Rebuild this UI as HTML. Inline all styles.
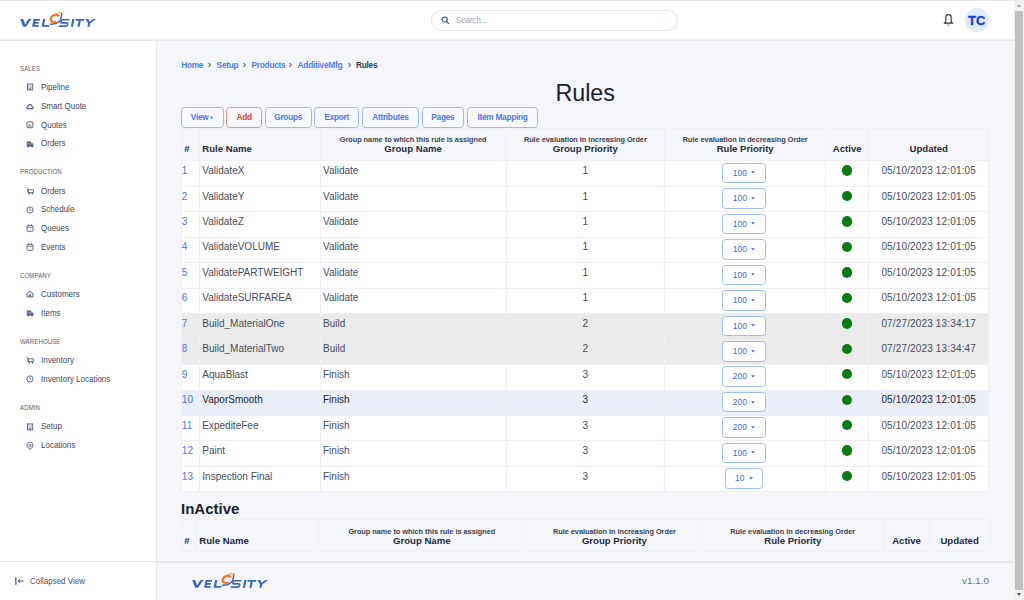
<!DOCTYPE html><html><head><meta charset='utf-8'><style>
*{box-sizing:border-box;margin:0;padding:0}
html,body{width:1024px;height:600px;overflow:hidden;background:#f5f6fa;font-family:"Liberation Sans", sans-serif;}
.a{position:absolute;white-space:nowrap}
.sb-l{position:absolute;left:20px;font-size:7px;color:#535c70;letter-spacing:0.1px;transform:scaleX(0.87);transform-origin:0 0}
.sb-i{position:absolute;left:41px;font-size:8.6px;color:#3f4659;transform:scaleX(0.93);transform-origin:0 0}
.ic{position:absolute;left:26px;width:7px;height:7px}
.bc{position:absolute;top:60.2px;font-size:8.3px;font-weight:bold;color:#4f7cf3;letter-spacing:-0.25px}
.chev{position:absolute;top:61px;font-size:7px;color:#5a6070}
.btn{position:absolute;top:107.3px;height:20.4px;border:1px solid #9db8f8;border-radius:3.5px;font-size:8.3px;font-weight:bold;color:#4d78ef;text-align:center;line-height:18.6px;background:#f7f8fc;letter-spacing:-0.28px}
.tline{position:absolute;background:#eef0f5}
.td{position:absolute;font-size:10px;color:#474d5c;white-space:nowrap}
.th{position:absolute;font-size:9.6px;font-weight:bold;color:#262b3a;white-space:nowrap;text-align:center}
.ths{position:absolute;font-size:7.3px;font-weight:bold;color:#3a3f4d;white-space:nowrap;text-align:center}
.dd{position:absolute;height:20.5px;border:1.1px solid #a0bbfa;border-radius:3.5px;background:#fff;font-size:8.5px;color:#3d6af0;text-align:center;line-height:18.4px}
.car{display:inline-block;margin-left:4.2px;vertical-align:1.4px}
.dot{position:absolute;width:10.4px;height:10.4px;border-radius:50%;background:#0a7a12}
</style></head><body>
<div class="a" style="left:0;top:0;width:1014px;height:40px;background:#fff"></div>
<div class="a" style="left:0;top:0;width:1014px;height:1px;background:#ebebeb"></div>
<div class="a" style="left:0;top:39px;width:1014px;height:1px;background:#eceef3"></div><div class="a" style="left:0;top:40px;width:1014px;height:1px;background:#e6e8ee"></div>
<svg class="a" style="left:0px;top:0px" width="100" height="30" viewBox="0 0 100 30" overflow="visible"><g fill="#3d66c2"><polygon points="20.14,19.00 23.14,19.00 25.10,24.20 28.54,19.00 31.54,19.00 25.98,26.80 23.18,26.80"/><polygon points="33.64,19.00 40.14,19.00 39.80,20.70 35.50,20.70 35.22,22.10 38.92,22.10 38.60,23.70 34.90,23.70 34.62,25.10 38.72,25.10 38.38,26.80 32.08,26.80"/><polygon points="43.14,19.00 45.34,19.00 44.12,25.10 49.32,25.10 48.98,26.80 41.58,26.80"/><polygon points="72.34,19.00 74.54,19.00 72.98,26.80 70.78,26.80"/><polygon points="75.74,19.00 84.44,19.00 84.10,20.70 80.80,20.70 79.58,26.80 77.38,26.80 78.60,20.70 75.40,20.70"/><polygon points="85.44,19.00 88.34,19.00 89.58,21.80 93.24,19.00 96.14,19.00 90.24,23.50 89.58,26.80 87.38,26.80 88.04,23.50"/></g><path d="M67.9 19.75 H61.2 Q59.9 19.75 59.9 21.0 V21.7 Q59.9 22.9 61.2 22.9 H65.9 Q67.2 22.9 67.2 24.1 V24.8 Q67.2 26.05 65.9 26.05 H58.9" stroke="#3d66c2" stroke-width="1.7" fill="none" transform="matrix(1 0 -0.2 1 5.34 0)"/><path d="M50.2 24.3 Q56.2 24.3 59.2 21.6 Q61.7 18.8 61.6 13.2" stroke="#3d66c2" stroke-width="1.4" fill="none" stroke-linecap="round"/><path d="M59.0 16.4 A4.5 3.4 -20 1 0 56.6 21.5" stroke="#f27b2c" stroke-width="2.4" fill="none"/><path d="M55.4 13.9 Q58.8 11.9 62.8 12.9" stroke="#f59a5a" stroke-width="1.0" fill="none" stroke-linecap="round"/></svg>
<div class="a" style="left:431px;top:10px;width:246.5px;height:20.5px;border:1.2px solid #e3e5ee;border-radius:11px;background:#fff"></div>
<svg class="a" style="left:440.5px;top:16px" width="9" height="9" viewBox="0 0 9 9"><circle cx="3.7" cy="3.6" r="2.55" stroke="#57678a" stroke-width="1.3" fill="none"/><path d="M5.7 5.6 L7.6 7.4" stroke="#57678a" stroke-width="1.4" stroke-linecap="round"/></svg>
<div class="a" style="left:456px;top:14.5px;font-size:8.3px;color:#a0a8bb;letter-spacing:-0.3px">Search...</div>
<svg class="a" style="left:942px;top:13px" width="13" height="14" viewBox="0 0 13 14"><path d="M3.5 9.3 Q3.8 8.6 3.8 7.4 V4.3 A2.7 2.7 0 0 1 9.2 4.3 V7.4 Q9.2 8.6 9.5 9.3 L10.9 10.1 H2.1 Z" stroke="#2a2f3e" stroke-width="1.05" fill="none" stroke-linejoin="round"/><path d="M5.5 11.6 L6.5 12.6 L7.5 11.6" stroke="#2a2f3e" stroke-width="0.9" fill="none"/></svg>
<div class="a" style="left:964.6px;top:7.7px;width:24.3px;height:24.3px;border-radius:50%;background:#e3ebfb"></div>
<div class="a" style="left:968px;top:13.1px;font-size:12.9px;font-weight:bold;color:#0b40f0;letter-spacing:0.15px;-webkit-text-stroke:0.35px #0b40f0">TC</div>
<div class="a" style="left:0;top:41px;width:156px;height:559px;background:#fff"></div>
<div class="a" style="left:156px;top:41px;width:1px;height:559px;background:#e4e6ed"></div>
<div class="a" style="left:0;top:561px;width:156px;height:1px;background:#e4e6ed"></div>
<div class="sb-l" style="top:64.80px">SALES</div>
<div class="sb-i" style="top:82.10px">Pipeline</div>
<svg class="a" style="left:25.5px;top:83.45px" width="8" height="8" viewBox="0 0 8 8"><rect x="1.5" y="0.9" width="5.2" height="6.0" fill="#d3d9e6" stroke="#56607a" stroke-width="0.85"/><rect x="3.6" y="4.6" width="1.1" height="2.3" fill="#56607a"/></svg>
<div class="sb-i" style="top:100.85px">Smart Quote</div>
<svg class="a" style="left:25.5px;top:102.20px" width="8" height="8" viewBox="0 0 8 8"><path d="M1.1 6.6 H6.9 Q7.4 6.6 7.3 5.6 Q7.1 4.7 6.1 4.6 Q5.7 2.6 4.0 2.6 Q2.3 2.6 1.9 4.6 Q0.9 4.7 0.7 5.6 Q0.6 6.6 1.1 6.6 Z" stroke="#56607a" stroke-width="1.05" fill="none"/></svg>
<div class="sb-i" style="top:119.60px">Quotes</div>
<svg class="a" style="left:25.5px;top:120.95px" width="8" height="8" viewBox="0 0 8 8"><rect x="1.0" y="0.8" width="5.9" height="5.9" rx="1.0" stroke="#56607a" stroke-width="0.95" fill="none"/><path d="M2.2 4.4 L3.4 3.1 L4.4 4.0 L5.6 4.4 Z" fill="#56607a"/><path d="M1.6 5.2 H6.3" stroke="#56607a" stroke-width="0.6"/></svg>
<div class="sb-i" style="top:138.35px">Orders</div>
<svg class="a" style="left:25.5px;top:139.70px" width="8" height="8" viewBox="0 0 8 8"><path d="M0.8 1.4 H5.0 V2.8 H6.3 L7.4 4.0 V6.4 H0.8 Z" fill="#56607a"/><circle cx="2.3" cy="6.6" r="0.9" fill="#56607a"/><circle cx="6.0" cy="6.6" r="0.9" fill="#56607a"/><path d="M1.3 3.9 H7.0" stroke="#e8ecf4" stroke-width="0.55"/></svg>
<div class="sb-l" style="top:168.30px">PRODUCTION</div>
<div class="sb-i" style="top:185.60px">Orders</div>
<svg class="a" style="left:25.5px;top:186.95px" width="8" height="8" viewBox="0 0 8 8"><path d="M0.7 0.4 L1.6 1.4 L2.3 5.6" stroke="#56607a" stroke-width="0.9" fill="none"/><path d="M2.0 2.8 H7.4 V5.6 H2.3 Z" stroke="#56607a" stroke-width="0.9" fill="none"/><circle cx="3.2" cy="6.7" r="0.85" fill="#56607a"/><circle cx="6.4" cy="6.7" r="0.85" fill="#56607a"/></svg>
<div class="sb-i" style="top:204.35px">Schedule</div>
<svg class="a" style="left:25.5px;top:205.70px" width="8" height="8" viewBox="0 0 8 8"><circle cx="4.0" cy="4.0" r="3.1" stroke="#56607a" stroke-width="0.9" fill="none"/><path d="M4.0 2.1 V4.1 L5.3 5.0" stroke="#56607a" stroke-width="0.85" fill="none"/></svg>
<div class="sb-i" style="top:223.10px">Queues</div>
<svg class="a" style="left:25.5px;top:224.45px" width="8" height="8" viewBox="0 0 8 8"><rect x="1.0" y="1.3" width="6.0" height="6.0" rx="0.9" stroke="#56607a" stroke-width="0.9" fill="none"/><path d="M2.6 0.5 V2.2 M5.4 0.5 V2.2 M1.0 3.2 H7.0" stroke="#56607a" stroke-width="0.8" fill="none"/><path d="M4.0 3.4 V7.1" stroke="#c7cdda" stroke-width="0.5"/></svg>
<div class="sb-i" style="top:241.85px">Events</div>
<svg class="a" style="left:25.5px;top:243.20px" width="8" height="8" viewBox="0 0 8 8"><rect x="1.0" y="1.3" width="6.0" height="6.0" rx="0.9" stroke="#56607a" stroke-width="0.9" fill="none"/><path d="M2.6 0.5 V2.2 M5.4 0.5 V2.2 M1.0 3.2 H7.0" stroke="#56607a" stroke-width="0.8" fill="none"/><path d="M4.0 3.4 V7.1" stroke="#c7cdda" stroke-width="0.5"/></svg>
<div class="sb-l" style="top:271.60px">COMPANY</div>
<div class="sb-i" style="top:288.90px">Customers</div>
<svg class="a" style="left:25.5px;top:290.25px" width="8" height="8" viewBox="0 0 8 8"><path d="M1.0 3.5 L4.0 0.9 L7.0 3.5 V6.9 H1.0 Z" stroke="#56607a" stroke-width="0.9" fill="#dfe4ee" stroke-linejoin="round"/><rect x="3.2" y="4.4" width="1.6" height="2.5" fill="#56607a"/></svg>
<div class="sb-i" style="top:307.65px">Items</div>
<svg class="a" style="left:25.5px;top:309.00px" width="8" height="8" viewBox="0 0 8 8"><path d="M0.8 1.4 H5.0 V2.8 H6.3 L7.4 4.0 V6.4 H0.8 Z" fill="#56607a"/><circle cx="2.3" cy="6.6" r="0.9" fill="#56607a"/><circle cx="6.0" cy="6.6" r="0.9" fill="#56607a"/><path d="M1.3 3.9 H7.0" stroke="#e8ecf4" stroke-width="0.55"/></svg>
<div class="sb-l" style="top:337.60px">WAREHOUSE</div>
<div class="sb-i" style="top:354.90px">Inventory</div>
<svg class="a" style="left:25.5px;top:356.25px" width="8" height="8" viewBox="0 0 8 8"><path d="M0.7 0.4 L1.6 1.4 L2.3 5.6" stroke="#56607a" stroke-width="0.9" fill="none"/><path d="M2.0 2.8 H7.4 V5.6 H2.3 Z" stroke="#56607a" stroke-width="0.9" fill="none"/><circle cx="3.2" cy="6.7" r="0.85" fill="#56607a"/><circle cx="6.4" cy="6.7" r="0.85" fill="#56607a"/></svg>
<div class="sb-i" style="top:373.65px">Inventory Locations</div>
<svg class="a" style="left:25.5px;top:375.00px" width="8" height="8" viewBox="0 0 8 8"><circle cx="4.0" cy="4.0" r="3.1" stroke="#56607a" stroke-width="0.9" fill="none"/><path d="M4.0 2.1 V4.1 L5.3 5.0" stroke="#56607a" stroke-width="0.85" fill="none"/></svg>
<div class="sb-l" style="top:404.10px">ADMIN</div>
<div class="sb-i" style="top:421.40px">Setup</div>
<svg class="a" style="left:25.5px;top:422.75px" width="8" height="8" viewBox="0 0 8 8"><rect x="1.5" y="0.9" width="5.2" height="6.0" fill="#d3d9e6" stroke="#56607a" stroke-width="0.85"/><rect x="3.6" y="4.6" width="1.1" height="2.3" fill="#56607a"/></svg>
<div class="sb-i" style="top:440.15px">Locations</div>
<svg class="a" style="left:25.5px;top:441.50px" width="8" height="8" viewBox="0 0 8 8"><path d="M4.0 7.7 L1.7 5.2 A3.1 3.1 0 1 1 6.3 5.2 Z" stroke="#56607a" stroke-width="0.85" fill="#e3e7f0"/><circle cx="4.0" cy="3.4" r="1.0" stroke="#56607a" stroke-width="0.7" fill="none"/></svg>
<div class="sb-i" style="left:29.5px;top:575.5px;color:#4a5266">Collapsed View</div>
<svg class="a" style="left:14px;top:576px" width="11" height="10" viewBox="0 0 11 10"><path d="M1.8 1.2 V8.8" stroke="#4a5266" stroke-width="1.2"/><path d="M4.2 5 H9.6 M6.2 3.2 L4.2 5 L6.2 6.8" stroke="#4a5266" stroke-width="1.0" fill="none"/></svg>
<div class="bc" style="left:181.2px">Home</div>
<div class="bc" style="left:216.6px">Setup</div>
<div class="bc" style="left:251.5px">Products</div>
<div class="bc" style="left:297.6px">AdditiveMfg</div>
<svg class="a" style="left:207.0px;top:62px" width="5" height="6" viewBox="0 0 5 6"><path d="M1.6 1.0 L3.4 2.9 L1.6 4.8" stroke="#5d6372" stroke-width="1.05" fill="none"/></svg>
<svg class="a" style="left:242.3px;top:62px" width="5" height="6" viewBox="0 0 5 6"><path d="M1.6 1.0 L3.4 2.9 L1.6 4.8" stroke="#5d6372" stroke-width="1.05" fill="none"/></svg>
<svg class="a" style="left:288.1px;top:62px" width="5" height="6" viewBox="0 0 5 6"><path d="M1.6 1.0 L3.4 2.9 L1.6 4.8" stroke="#5d6372" stroke-width="1.05" fill="none"/></svg>
<svg class="a" style="left:346.6px;top:62px" width="5" height="6" viewBox="0 0 5 6"><path d="M1.6 1.0 L3.4 2.9 L1.6 4.8" stroke="#5d6372" stroke-width="1.05" fill="none"/></svg>
<div class="bc" style="left:356px;color:#383c48">Rules</div>
<div class="a" style="left:555.4px;top:80px;font-size:23.3px;color:#1c2130">Rules</div>
<div class="btn" style="left:180.6px;width:43.4px;">View<svg width="4" height="5" viewBox="0 0 4 5" style="margin-left:1.3px;vertical-align:0.3px"><path d="M0.8 0.8 L3.0 2.5 L0.8 4.2 Z" fill="#3d6af0"/></svg></div>
<div class="btn" style="left:226.1px;width:36.2px;border-color:#ec8f86;color:#e0392c;">Add</div>
<div class="btn" style="left:264.5px;width:47.3px;">Groups</div>
<div class="btn" style="left:314.2px;width:45.1px;">Export</div>
<div class="btn" style="left:361.5px;width:57.8px;">Attributes</div>
<div class="btn" style="left:421.8px;width:42.2px;">Pages</div>
<div class="btn" style="left:466.8px;width:71.5px;">Item Mapping</div>
<div class="a" style="left:181.25px;top:128px;width:807.5px;height:32.400000000000006px;background:#f5f6fa"></div>
<div class="a" style="left:181.25px;top:160.40px;width:807.5px;height:25.46px;background:#fff"></div>
<div class="a" style="left:181.25px;top:185.86px;width:807.5px;height:25.46px;background:#fff"></div>
<div class="a" style="left:181.25px;top:211.32px;width:807.5px;height:25.46px;background:#fff"></div>
<div class="a" style="left:181.25px;top:236.78px;width:807.5px;height:25.46px;background:#fff"></div>
<div class="a" style="left:181.25px;top:262.24px;width:807.5px;height:25.46px;background:#fff"></div>
<div class="a" style="left:181.25px;top:287.70px;width:807.5px;height:25.46px;background:#fff"></div>
<div class="a" style="left:181.25px;top:313.16px;width:807.5px;height:25.46px;background:#ebebeb"></div>
<div class="a" style="left:181.25px;top:338.62px;width:807.5px;height:25.46px;background:#ebebeb"></div>
<div class="a" style="left:181.25px;top:364.08px;width:807.5px;height:25.46px;background:#fff"></div>
<div class="a" style="left:181.25px;top:389.54px;width:807.5px;height:25.46px;background:#e9eef9"></div>
<div class="a" style="left:181.25px;top:415.00px;width:807.5px;height:25.46px;background:#fff"></div>
<div class="a" style="left:181.25px;top:440.46px;width:807.5px;height:25.46px;background:#fff"></div>
<div class="a" style="left:181.25px;top:465.92px;width:807.5px;height:25.46px;background:#fff"></div>
<div class="tline" style="left:180.75px;top:128px;width:1px;height:363.38px"></div>
<div class="tline" style="left:198.80px;top:128px;width:1px;height:363.38px"></div>
<div class="tline" style="left:319.50px;top:128px;width:1px;height:363.38px"></div>
<div class="tline" style="left:505.70px;top:128px;width:1px;height:363.38px"></div>
<div class="tline" style="left:664.00px;top:128px;width:1px;height:363.38px"></div>
<div class="tline" style="left:825.30px;top:128px;width:1px;height:363.38px"></div>
<div class="tline" style="left:868.20px;top:128px;width:1px;height:363.38px"></div>
<div class="tline" style="left:988.25px;top:128px;width:1px;height:363.38px"></div>
<div class="tline" style="left:181.25px;top:160.40px;width:807.5px;height:1px"></div>
<div class="tline" style="left:181.25px;top:185.86px;width:807.5px;height:1px"></div>
<div class="tline" style="left:181.25px;top:211.32px;width:807.5px;height:1px"></div>
<div class="tline" style="left:181.25px;top:236.78px;width:807.5px;height:1px"></div>
<div class="tline" style="left:181.25px;top:262.24px;width:807.5px;height:1px"></div>
<div class="tline" style="left:181.25px;top:287.70px;width:807.5px;height:1px"></div>
<div class="tline" style="left:181.25px;top:313.16px;width:807.5px;height:1px"></div>
<div class="tline" style="left:181.25px;top:338.62px;width:807.5px;height:1px"></div>
<div class="tline" style="left:181.25px;top:364.08px;width:807.5px;height:1px"></div>
<div class="tline" style="left:181.25px;top:389.54px;width:807.5px;height:1px"></div>
<div class="tline" style="left:181.25px;top:415.00px;width:807.5px;height:1px"></div>
<div class="tline" style="left:181.25px;top:440.46px;width:807.5px;height:1px"></div>
<div class="tline" style="left:181.25px;top:465.92px;width:807.5px;height:1px"></div>
<div class="tline" style="left:181.25px;top:491.38px;width:807.5px;height:1px"></div>
<div class="tline" style="left:181.25px;top:128px;width:807.5px;height:1px"></div>
<div class="th" style="left:184.25px;top:142.5px">#</div>
<div class="th" style="left:202.3px;top:142.5px">Rule Name</div>
<div class="ths" style="left:320px;width:186.2px;top:135.0px">Group name to which this rule is assigned</div>
<div class="th" style="left:320px;width:186.2px;top:142.5px">Group Name</div>
<div class="ths" style="left:506.2px;width:158.3px;top:135.0px">Rule evaluation in increasing Order</div>
<div class="th" style="left:506.2px;width:158.3px;top:142.5px">Group Priority</div>
<div class="ths" style="left:664.5px;width:161.3px;top:135.0px">Rule evaluation in decreasing Order</div>
<div class="th" style="left:664.5px;width:161.3px;top:142.5px">Rule Priority</div>
<div class="th" style="left:825.8px;width:42.9px;top:142.5px">Active</div>
<div class="th" style="left:868.7px;width:120.0px;top:142.5px">Updated</div>
<div class="td" style="left:181.85px;top:165.10px;color:#4d74e6">1</div>
<div class="td" style="left:202.3px;top:165.10px;color:#474d5c">ValidateX</div>
<div class="td" style="left:323px;top:165.10px;color:#474d5c">Validate</div>
<div class="td" style="left:506.2px;width:158.3px;text-align:center;top:165.10px;color:#474d5c">1</div>
<div class="dd" style="left:722.35px;top:162.80px;width:43.2px">100<svg class="car" width="4" height="3" viewBox="0 0 4 3"><path d="M0 0.3 H4 L2 2.6 Z" fill="#3d6af0"/></svg></div>
<div class="dot" style="left:841.6999999999999px;top:165.40px"></div>
<div class="td" style="left:868.7px;width:120.0px;text-align:center;top:165.10px;color:#474d5c;letter-spacing:0.15px">05/10/2023 12:01:05</div>
<div class="td" style="left:181.85px;top:190.56px;color:#4d74e6">2</div>
<div class="td" style="left:202.3px;top:190.56px;color:#474d5c">ValidateY</div>
<div class="td" style="left:323px;top:190.56px;color:#474d5c">Validate</div>
<div class="td" style="left:506.2px;width:158.3px;text-align:center;top:190.56px;color:#474d5c">1</div>
<div class="dd" style="left:722.35px;top:188.26px;width:43.2px">100<svg class="car" width="4" height="3" viewBox="0 0 4 3"><path d="M0 0.3 H4 L2 2.6 Z" fill="#3d6af0"/></svg></div>
<div class="dot" style="left:841.6999999999999px;top:190.86px"></div>
<div class="td" style="left:868.7px;width:120.0px;text-align:center;top:190.56px;color:#474d5c;letter-spacing:0.15px">05/10/2023 12:01:05</div>
<div class="td" style="left:181.85px;top:216.02px;color:#4d74e6">3</div>
<div class="td" style="left:202.3px;top:216.02px;color:#474d5c">ValidateZ</div>
<div class="td" style="left:323px;top:216.02px;color:#474d5c">Validate</div>
<div class="td" style="left:506.2px;width:158.3px;text-align:center;top:216.02px;color:#474d5c">1</div>
<div class="dd" style="left:722.35px;top:213.72px;width:43.2px">100<svg class="car" width="4" height="3" viewBox="0 0 4 3"><path d="M0 0.3 H4 L2 2.6 Z" fill="#3d6af0"/></svg></div>
<div class="dot" style="left:841.6999999999999px;top:216.32px"></div>
<div class="td" style="left:868.7px;width:120.0px;text-align:center;top:216.02px;color:#474d5c;letter-spacing:0.15px">05/10/2023 12:01:05</div>
<div class="td" style="left:181.85px;top:241.48px;color:#4d74e6">4</div>
<div class="td" style="left:202.3px;top:241.48px;color:#474d5c">ValidateVOLUME</div>
<div class="td" style="left:323px;top:241.48px;color:#474d5c">Validate</div>
<div class="td" style="left:506.2px;width:158.3px;text-align:center;top:241.48px;color:#474d5c">1</div>
<div class="dd" style="left:722.35px;top:239.18px;width:43.2px">100<svg class="car" width="4" height="3" viewBox="0 0 4 3"><path d="M0 0.3 H4 L2 2.6 Z" fill="#3d6af0"/></svg></div>
<div class="dot" style="left:841.6999999999999px;top:241.78px"></div>
<div class="td" style="left:868.7px;width:120.0px;text-align:center;top:241.48px;color:#474d5c;letter-spacing:0.15px">05/10/2023 12:01:05</div>
<div class="td" style="left:181.85px;top:266.94px;color:#4d74e6">5</div>
<div class="td" style="left:202.3px;top:266.94px;color:#474d5c">ValidatePARTWEIGHT</div>
<div class="td" style="left:323px;top:266.94px;color:#474d5c">Validate</div>
<div class="td" style="left:506.2px;width:158.3px;text-align:center;top:266.94px;color:#474d5c">1</div>
<div class="dd" style="left:722.35px;top:264.64px;width:43.2px">100<svg class="car" width="4" height="3" viewBox="0 0 4 3"><path d="M0 0.3 H4 L2 2.6 Z" fill="#3d6af0"/></svg></div>
<div class="dot" style="left:841.6999999999999px;top:267.24px"></div>
<div class="td" style="left:868.7px;width:120.0px;text-align:center;top:266.94px;color:#474d5c;letter-spacing:0.15px">05/10/2023 12:01:05</div>
<div class="td" style="left:181.85px;top:292.40px;color:#4d74e6">6</div>
<div class="td" style="left:202.3px;top:292.40px;color:#474d5c">ValidateSURFAREA</div>
<div class="td" style="left:323px;top:292.40px;color:#474d5c">Validate</div>
<div class="td" style="left:506.2px;width:158.3px;text-align:center;top:292.40px;color:#474d5c">1</div>
<div class="dd" style="left:722.35px;top:290.10px;width:43.2px">100<svg class="car" width="4" height="3" viewBox="0 0 4 3"><path d="M0 0.3 H4 L2 2.6 Z" fill="#3d6af0"/></svg></div>
<div class="dot" style="left:841.6999999999999px;top:292.70px"></div>
<div class="td" style="left:868.7px;width:120.0px;text-align:center;top:292.40px;color:#474d5c;letter-spacing:0.15px">05/10/2023 12:01:05</div>
<div class="td" style="left:181.85px;top:317.86px;color:#4d74e6">7</div>
<div class="td" style="left:202.3px;top:317.86px;color:#474d5c">Build_MaterialOne</div>
<div class="td" style="left:323px;top:317.86px;color:#474d5c">Build</div>
<div class="td" style="left:506.2px;width:158.3px;text-align:center;top:317.86px;color:#474d5c">2</div>
<div class="dd" style="left:722.35px;top:315.56px;width:43.2px">100<svg class="car" width="4" height="3" viewBox="0 0 4 3"><path d="M0 0.3 H4 L2 2.6 Z" fill="#3d6af0"/></svg></div>
<div class="dot" style="left:841.6999999999999px;top:318.16px"></div>
<div class="td" style="left:868.7px;width:120.0px;text-align:center;top:317.86px;color:#474d5c;letter-spacing:0.15px">07/27/2023 13:34:17</div>
<div class="td" style="left:181.85px;top:343.32px;color:#4d74e6">8</div>
<div class="td" style="left:202.3px;top:343.32px;color:#474d5c">Build_MaterialTwo</div>
<div class="td" style="left:323px;top:343.32px;color:#474d5c">Build</div>
<div class="td" style="left:506.2px;width:158.3px;text-align:center;top:343.32px;color:#474d5c">2</div>
<div class="dd" style="left:722.35px;top:341.02px;width:43.2px">100<svg class="car" width="4" height="3" viewBox="0 0 4 3"><path d="M0 0.3 H4 L2 2.6 Z" fill="#3d6af0"/></svg></div>
<div class="dot" style="left:841.6999999999999px;top:343.62px"></div>
<div class="td" style="left:868.7px;width:120.0px;text-align:center;top:343.32px;color:#474d5c;letter-spacing:0.15px">07/27/2023 13:34:47</div>
<div class="td" style="left:181.85px;top:368.78px;color:#4d74e6">9</div>
<div class="td" style="left:202.3px;top:368.78px;color:#474d5c">AquaBlast</div>
<div class="td" style="left:323px;top:368.78px;color:#474d5c">Finish</div>
<div class="td" style="left:506.2px;width:158.3px;text-align:center;top:368.78px;color:#474d5c">3</div>
<div class="dd" style="left:722.35px;top:366.48px;width:43.2px">200<svg class="car" width="4" height="3" viewBox="0 0 4 3"><path d="M0 0.3 H4 L2 2.6 Z" fill="#3d6af0"/></svg></div>
<div class="dot" style="left:841.6999999999999px;top:369.08px"></div>
<div class="td" style="left:868.7px;width:120.0px;text-align:center;top:368.78px;color:#474d5c;letter-spacing:0.15px">05/10/2023 12:01:05</div>
<div class="td" style="left:181.85px;top:394.24px;color:#4d74e6">10</div>
<div class="td" style="left:202.3px;top:394.24px;color:#1f2330">VaporSmooth</div>
<div class="td" style="left:323px;top:394.24px;color:#1f2330">Finish</div>
<div class="td" style="left:506.2px;width:158.3px;text-align:center;top:394.24px;color:#1f2330">3</div>
<div class="dd" style="left:722.35px;top:391.94px;width:43.2px">200<svg class="car" width="4" height="3" viewBox="0 0 4 3"><path d="M0 0.3 H4 L2 2.6 Z" fill="#3d6af0"/></svg></div>
<div class="dot" style="left:841.6999999999999px;top:394.54px"></div>
<div class="td" style="left:868.7px;width:120.0px;text-align:center;top:394.24px;color:#1f2330;letter-spacing:0.15px">05/10/2023 12:01:05</div>
<div class="td" style="left:181.85px;top:419.70px;color:#4d74e6">11</div>
<div class="td" style="left:202.3px;top:419.70px;color:#474d5c">ExpediteFee</div>
<div class="td" style="left:323px;top:419.70px;color:#474d5c">Finish</div>
<div class="td" style="left:506.2px;width:158.3px;text-align:center;top:419.70px;color:#474d5c">3</div>
<div class="dd" style="left:722.35px;top:417.40px;width:43.2px">200<svg class="car" width="4" height="3" viewBox="0 0 4 3"><path d="M0 0.3 H4 L2 2.6 Z" fill="#3d6af0"/></svg></div>
<div class="dot" style="left:841.6999999999999px;top:420.00px"></div>
<div class="td" style="left:868.7px;width:120.0px;text-align:center;top:419.70px;color:#474d5c;letter-spacing:0.15px">05/10/2023 12:01:05</div>
<div class="td" style="left:181.85px;top:445.16px;color:#4d74e6">12</div>
<div class="td" style="left:202.3px;top:445.16px;color:#474d5c">Paint</div>
<div class="td" style="left:323px;top:445.16px;color:#474d5c">Finish</div>
<div class="td" style="left:506.2px;width:158.3px;text-align:center;top:445.16px;color:#474d5c">3</div>
<div class="dd" style="left:722.35px;top:442.86px;width:43.2px">100<svg class="car" width="4" height="3" viewBox="0 0 4 3"><path d="M0 0.3 H4 L2 2.6 Z" fill="#3d6af0"/></svg></div>
<div class="dot" style="left:841.6999999999999px;top:445.46px"></div>
<div class="td" style="left:868.7px;width:120.0px;text-align:center;top:445.16px;color:#474d5c;letter-spacing:0.15px">05/10/2023 12:01:05</div>
<div class="td" style="left:181.85px;top:470.62px;color:#4d74e6">13</div>
<div class="td" style="left:202.3px;top:470.62px;color:#474d5c">Inspection Final</div>
<div class="td" style="left:323px;top:470.62px;color:#474d5c">Finish</div>
<div class="td" style="left:506.2px;width:158.3px;text-align:center;top:470.62px;color:#474d5c">3</div>
<div class="dd" style="left:725.20px;top:468.32px;width:37.5px">10<svg class="car" width="4" height="3" viewBox="0 0 4 3"><path d="M0 0.3 H4 L2 2.6 Z" fill="#3d6af0"/></svg></div>
<div class="dot" style="left:841.6999999999999px;top:470.92px"></div>
<div class="td" style="left:868.7px;width:120.0px;text-align:center;top:470.62px;color:#474d5c;letter-spacing:0.15px">05/10/2023 12:01:05</div>
<div class="a" style="left:181px;top:499.5px;font-size:15px;font-weight:bold;color:#1c2130">InActive</div>
<div class="a" style="left:181.25px;top:519.5px;width:807.95px;height:32.0px;background:#f5f6fa"></div>
<div class="tline" style="left:180.75px;top:519.5px;width:1px;height:32.0px"></div>
<div class="tline" style="left:195.75px;top:519.5px;width:1px;height:32.0px"></div>
<div class="tline" style="left:316.70px;top:519.5px;width:1px;height:32.0px"></div>
<div class="tline" style="left:525.90px;top:519.5px;width:1px;height:32.0px"></div>
<div class="tline" style="left:701.90px;top:519.5px;width:1px;height:32.0px"></div>
<div class="tline" style="left:882.60px;top:519.5px;width:1px;height:32.0px"></div>
<div class="tline" style="left:929.50px;top:519.5px;width:1px;height:32.0px"></div>
<div class="tline" style="left:988.70px;top:519.5px;width:1px;height:32.0px"></div>
<div class="tline" style="left:181.25px;top:519.0px;width:807.95px;height:1px"></div>
<div class="tline" style="left:181.25px;top:551.0px;width:807.95px;height:1px"></div>
<div class="th" style="left:184.25px;top:534.8px">#</div>
<div class="th" style="left:199.25px;top:534.8px">Rule Name</div>
<div class="ths" style="left:317.2px;width:209.2px;top:526.8px">Group name to which this rule is assigned</div>
<div class="th" style="left:317.2px;width:209.2px;top:534.8px">Group Name</div>
<div class="ths" style="left:526.4px;width:176.0px;top:526.8px">Rule evaluation in increasing Order</div>
<div class="th" style="left:526.4px;width:176.0px;top:534.8px">Group Priority</div>
<div class="ths" style="left:702.4px;width:180.7px;top:526.8px">Rule evaluation in decreasing Order</div>
<div class="th" style="left:702.4px;width:180.7px;top:534.8px">Rule Priority</div>
<div class="th" style="left:883.1px;width:46.9px;top:534.8px">Active</div>
<div class="th" style="left:930px;width:59.2px;top:534.8px">Updated</div>
<div class="a" style="left:157px;top:561px;width:857px;height:2px;background:#e6e8ef"></div>
<svg class="a" style="left:171.9px;top:561.3px" width="100" height="30" viewBox="0 0 100 30" overflow="visible"><g fill="#3d66c2"><polygon points="20.14,19.00 23.14,19.00 25.10,24.20 28.54,19.00 31.54,19.00 25.98,26.80 23.18,26.80"/><polygon points="33.64,19.00 40.14,19.00 39.80,20.70 35.50,20.70 35.22,22.10 38.92,22.10 38.60,23.70 34.90,23.70 34.62,25.10 38.72,25.10 38.38,26.80 32.08,26.80"/><polygon points="43.14,19.00 45.34,19.00 44.12,25.10 49.32,25.10 48.98,26.80 41.58,26.80"/><polygon points="72.34,19.00 74.54,19.00 72.98,26.80 70.78,26.80"/><polygon points="75.74,19.00 84.44,19.00 84.10,20.70 80.80,20.70 79.58,26.80 77.38,26.80 78.60,20.70 75.40,20.70"/><polygon points="85.44,19.00 88.34,19.00 89.58,21.80 93.24,19.00 96.14,19.00 90.24,23.50 89.58,26.80 87.38,26.80 88.04,23.50"/></g><path d="M67.9 19.75 H61.2 Q59.9 19.75 59.9 21.0 V21.7 Q59.9 22.9 61.2 22.9 H65.9 Q67.2 22.9 67.2 24.1 V24.8 Q67.2 26.05 65.9 26.05 H58.9" stroke="#3d66c2" stroke-width="1.7" fill="none" transform="matrix(1 0 -0.2 1 5.34 0)"/><path d="M50.2 24.3 Q56.2 24.3 59.2 21.6 Q61.7 18.8 61.6 13.2" stroke="#3d66c2" stroke-width="1.4" fill="none" stroke-linecap="round"/><path d="M59.0 16.4 A4.5 3.4 -20 1 0 56.6 21.5" stroke="#f27b2c" stroke-width="2.4" fill="none"/><path d="M55.4 13.9 Q58.8 11.9 62.8 12.9" stroke="#f59a5a" stroke-width="1.0" fill="none" stroke-linecap="round"/></svg>
<div class="a" style="left:962px;top:574.5px;font-size:9.9px;color:#6d7383">v1.1.0</div>
<div class="a" style="left:1014px;top:0;width:10px;height:600px;background:#f1f1f1"></div>
<div class="a" style="left:1015px;top:11px;width:8px;height:579px;background:#c1c1c1"></div>
<div class="a" style="left:1016.5px;top:4px;width:0;height:0;border-left:2.5px solid transparent;border-right:2.5px solid transparent;border-bottom:3px solid #a3a3a3"></div>
<div class="a" style="left:1016.5px;top:593px;width:0;height:0;border-left:2.5px solid transparent;border-right:2.5px solid transparent;border-top:3px solid #505050"></div>
<div class="a" style="left:0;top:0;width:1024px;height:1px;background:#ebebeb"></div>
</body></html>
